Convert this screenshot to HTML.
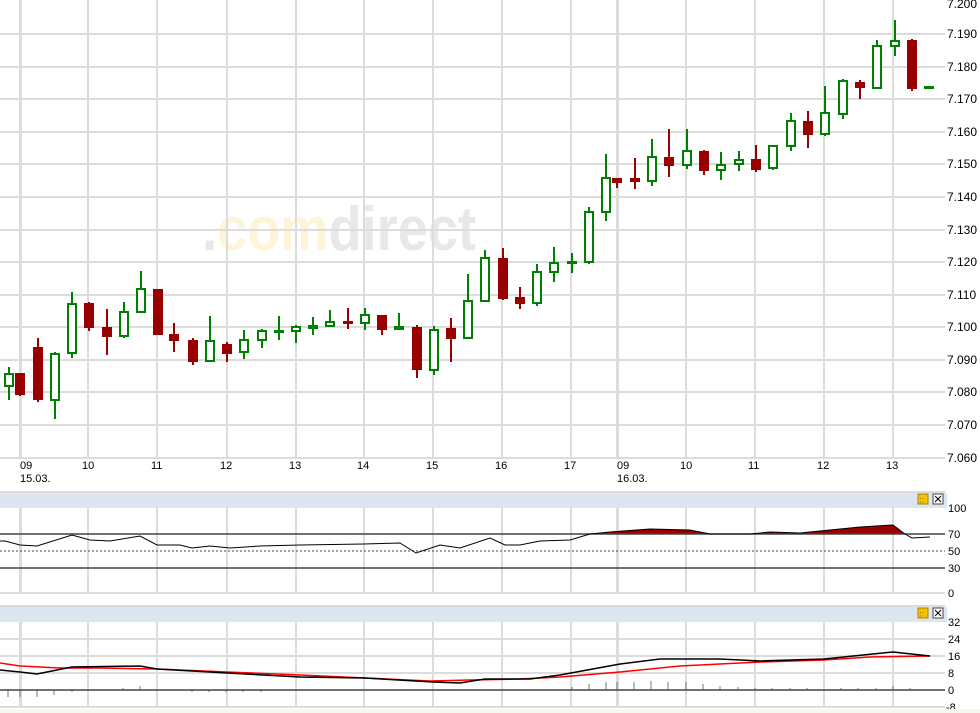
<!DOCTYPE html>
<html><head><meta charset="utf-8"><style>
html,body{margin:0;padding:0;background:#fff;width:980px;height:713px;overflow:hidden}
svg{display:block;font-family:"Liberation Sans",sans-serif}
</style></head><body>
<svg width="980" height="713" viewBox="0 0 980 713" xmlns="http://www.w3.org/2000/svg">
<rect width="980" height="713" fill="#fff"/>
<!-- watermark -->
<text x="202" y="250" font-size="62" font-weight="bold" textLength="274" lengthAdjust="spacingAndGlyphs"><tspan fill="#e8e8e8">.</tspan><tspan fill="#fdf4da">com</tspan><tspan fill="#e8e8e8">direct</tspan></text>
<!-- main grid -->
<g stroke="#dcdcdc" stroke-width="2">
<line x1="0" y1="34" x2="945" y2="34"/><line x1="0" y1="67" x2="945" y2="67"/><line x1="0" y1="99" x2="945" y2="99"/><line x1="0" y1="132" x2="945" y2="132"/><line x1="0" y1="164" x2="945" y2="164"/><line x1="0" y1="197" x2="945" y2="197"/><line x1="0" y1="230" x2="945" y2="230"/><line x1="0" y1="262" x2="945" y2="262"/><line x1="0" y1="295" x2="945" y2="295"/><line x1="0" y1="327" x2="945" y2="327"/><line x1="0" y1="360" x2="945" y2="360"/><line x1="0" y1="392" x2="945" y2="392"/><line x1="0" y1="425" x2="945" y2="425"/><line x1="0" y1="458" x2="945" y2="458"/>
<line x1="88" y1="0" x2="88" y2="458"/><line x1="157" y1="0" x2="157" y2="458"/><line x1="227" y1="0" x2="227" y2="458"/><line x1="296" y1="0" x2="296" y2="458"/><line x1="364" y1="0" x2="364" y2="458"/><line x1="433" y1="0" x2="433" y2="458"/><line x1="502" y1="0" x2="502" y2="458"/><line x1="571" y1="0" x2="571" y2="458"/><line x1="686" y1="0" x2="686" y2="458"/><line x1="755" y1="0" x2="755" y2="458"/><line x1="824" y1="0" x2="824" y2="458"/><line x1="893" y1="0" x2="893" y2="458"/>
</g>
<rect x="19" y="0" width="3" height="458" fill="#dcdcdc"/>
<rect x="616" y="0" width="3" height="458" fill="#dcdcdc"/>
<!-- candles -->
<g stroke-width="2">
<g stroke="#008000" fill="#fff">
<line x1="9" y1="367" x2="9" y2="400"/><rect x="5" y="374" width="8" height="12"/>
<line x1="55" y1="352" x2="55" y2="419"/><rect x="51" y="354" width="8" height="46"/>
<line x1="72" y1="292" x2="72" y2="358"/><rect x="68" y="304" width="8" height="49"/>
<line x1="124" y1="302" x2="124" y2="338"/><rect x="120" y="312" width="8" height="24"/>
<line x1="141" y1="271" x2="141" y2="312"/><rect x="137" y="289" width="8" height="23"/>
<line x1="210" y1="316" x2="210" y2="361"/><rect x="206" y="341" width="8" height="20"/>
<line x1="244" y1="330" x2="244" y2="359"/><rect x="240" y="340" width="8" height="12"/>
<line x1="262" y1="329" x2="262" y2="348"/><rect x="258" y="331" width="8" height="9"/>
<line x1="279" y1="316" x2="279" y2="340"/><rect x="275" y="331" width="8" height="1"/>
<line x1="296" y1="325" x2="296" y2="343"/><rect x="292" y="327" width="8" height="4"/>
<line x1="313" y1="317" x2="313" y2="335"/><rect x="309" y="326" width="8" height="2"/>
<line x1="330" y1="310" x2="330" y2="326"/><rect x="326" y="322" width="8" height="4"/>
<line x1="365" y1="308" x2="365" y2="330"/><rect x="361" y="315" width="8" height="8"/>
<line x1="399" y1="313" x2="399" y2="329"/><rect x="395" y="327" width="8" height="2"/>
<line x1="434" y1="326" x2="434" y2="375"/><rect x="430" y="330" width="8" height="40"/>
<line x1="468" y1="274" x2="468" y2="338"/><rect x="464" y="301" width="8" height="37"/>
<line x1="485" y1="250" x2="485" y2="301"/><rect x="481" y="258" width="8" height="43"/>
<line x1="537" y1="264" x2="537" y2="306"/><rect x="533" y="272" width="8" height="31"/>
<line x1="554" y1="247" x2="554" y2="282"/><rect x="550" y="263" width="8" height="9"/>
<line x1="572" y1="253" x2="572" y2="273"/><rect x="568" y="262" width="8" height="1"/>
<line x1="589" y1="207" x2="589" y2="264"/><rect x="585" y="212" width="8" height="50"/>
<line x1="606" y1="154" x2="606" y2="221"/><rect x="602" y="178" width="8" height="34"/>
<line x1="652" y1="139" x2="652" y2="186"/><rect x="648" y="157" width="8" height="24"/>
<line x1="687" y1="129" x2="687" y2="169"/><rect x="683" y="151" width="8" height="14"/>
<line x1="721" y1="152" x2="721" y2="180"/><rect x="717" y="165" width="8" height="5"/>
<line x1="739" y1="151" x2="739" y2="171"/><rect x="735" y="160" width="8" height="4"/>
<line x1="773" y1="145" x2="773" y2="170"/><rect x="769" y="146" width="8" height="22"/>
<line x1="791" y1="113" x2="791" y2="151"/><rect x="787" y="121" width="8" height="25"/>
<line x1="825" y1="86" x2="825" y2="136"/><rect x="821" y="113" width="8" height="21"/>
<line x1="843" y1="79" x2="843" y2="119"/><rect x="839" y="81" width="8" height="33"/>
<line x1="877" y1="40" x2="877" y2="88"/><rect x="873" y="46" width="8" height="42"/>
<line x1="895" y1="20" x2="895" y2="56"/><rect x="891" y="41" width="8" height="5"/>
<line x1="929" y1="86" x2="929" y2="89"/><rect x="925" y="87" width="8" height="1"/>
</g>
<g stroke="#990000" fill="#990000">
<line x1="20" y1="373" x2="20" y2="396"/><rect x="15" y="373" width="10" height="22" stroke="none"/>
<line x1="38" y1="338" x2="38" y2="402"/><rect x="33" y="347" width="10" height="53" stroke="none"/>
<line x1="89" y1="302" x2="89" y2="331"/><rect x="84" y="303" width="10" height="25" stroke="none"/>
<line x1="107" y1="309" x2="107" y2="355"/><rect x="102" y="327" width="10" height="10" stroke="none"/>
<rect x="153" y="289" width="10" height="46" stroke="none"/>
<line x1="174" y1="323" x2="174" y2="352"/><rect x="169" y="334" width="10" height="7" stroke="none"/>
<line x1="193" y1="338" x2="193" y2="365"/><rect x="188" y="340" width="10" height="22" stroke="none"/>
<line x1="227" y1="342" x2="227" y2="362"/><rect x="222" y="344" width="10" height="10" stroke="none"/>
<line x1="348" y1="308" x2="348" y2="329"/><rect x="343" y="321" width="10" height="3" stroke="none"/>
<line x1="382" y1="315" x2="382" y2="335"/><rect x="377" y="315" width="10" height="15" stroke="none"/>
<line x1="417" y1="325" x2="417" y2="378"/><rect x="412" y="327" width="10" height="43" stroke="none"/>
<line x1="451" y1="318" x2="451" y2="362"/><rect x="446" y="328" width="10" height="11" stroke="none"/>
<line x1="503" y1="248" x2="503" y2="300"/><rect x="498" y="258" width="10" height="41" stroke="none"/>
<line x1="520" y1="287" x2="520" y2="309"/><rect x="515" y="297" width="10" height="7" stroke="none"/>
<line x1="617" y1="178" x2="617" y2="188"/><rect x="612" y="178" width="10" height="5" stroke="none"/>
<line x1="635" y1="158" x2="635" y2="189"/><rect x="630" y="178" width="10" height="4" stroke="none"/>
<line x1="669" y1="129" x2="669" y2="177"/><rect x="664" y="157" width="10" height="9" stroke="none"/>
<line x1="704" y1="150" x2="704" y2="175"/><rect x="699" y="151" width="10" height="20" stroke="none"/>
<line x1="756" y1="145" x2="756" y2="172"/><rect x="751" y="159" width="10" height="11" stroke="none"/>
<line x1="808" y1="111" x2="808" y2="148"/><rect x="803" y="121" width="10" height="14" stroke="none"/>
<line x1="860" y1="80" x2="860" y2="99"/><rect x="855" y="82" width="10" height="6" stroke="none"/>
<line x1="912" y1="39" x2="912" y2="91"/><rect x="907" y="40" width="10" height="49" stroke="none"/>
</g>
</g>
<!-- y labels -->
<g font-size="12" fill="#000">
<text x="947" y="8">7.200</text><text x="947" y="38">7.190</text><text x="947" y="71">7.180</text><text x="947" y="103">7.170</text><text x="947" y="136">7.160</text><text x="947" y="168">7.150</text><text x="947" y="201">7.140</text><text x="947" y="234">7.130</text><text x="947" y="266">7.120</text><text x="947" y="299">7.110</text><text x="947" y="331">7.100</text><text x="947" y="364">7.090</text><text x="947" y="396">7.080</text><text x="947" y="429">7.070</text><text x="947" y="462">7.060</text>
</g>
<!-- x labels -->
<g font-size="11" fill="#000">
<text x="20" y="469">09</text><text x="20" y="482">15.03.</text>
<text x="82" y="469">10</text><text x="151" y="469">11</text><text x="220" y="469">12</text><text x="289" y="469">13</text><text x="357" y="469">14</text><text x="426" y="469">15</text><text x="495" y="469">16</text><text x="564" y="469">17</text>
<text x="617" y="469">09</text><text x="617" y="482">16.03.</text>
<text x="680" y="469">10</text><text x="748" y="469">11</text><text x="817" y="469">12</text><text x="886" y="469">13</text>
</g>
<!-- panel 1 -->
<line x1="0" y1="492" x2="945" y2="492" stroke="#dcdcdc" stroke-width="2"/>
<rect x="0" y="493" width="947" height="15" fill="#dce6f0"/>
<g stroke="#dcdcdc" stroke-width="2">
<line x1="0" y1="593" x2="945" y2="593"/>
<line x1="88" y1="508" x2="88" y2="593"/><line x1="157" y1="508" x2="157" y2="593"/><line x1="227" y1="508" x2="227" y2="593"/><line x1="296" y1="508" x2="296" y2="593"/><line x1="364" y1="508" x2="364" y2="593"/><line x1="433" y1="508" x2="433" y2="593"/><line x1="502" y1="508" x2="502" y2="593"/><line x1="571" y1="508" x2="571" y2="593"/><line x1="686" y1="508" x2="686" y2="593"/><line x1="755" y1="508" x2="755" y2="593"/><line x1="824" y1="508" x2="824" y2="593"/><line x1="893" y1="508" x2="893" y2="593"/>
</g>
<rect x="19" y="508" width="3" height="85" fill="#dcdcdc"/><rect x="616" y="508" width="3" height="85" fill="#dcdcdc"/>
<polygon fill="#990000" points="590,534 610,532 650,529 690,530 710,534 750,534 770,532 800,533 830,530 860,527 893,525 905,534" />
<line x1="0" y1="534" x2="945" y2="534" stroke="#444" stroke-width="1.5"/>
<line x1="0" y1="551" x2="945" y2="551" stroke="#444" stroke-width="1" stroke-dasharray="2,2"/>
<line x1="0" y1="568" x2="945" y2="568" stroke="#444" stroke-width="1.5"/>
<polyline fill="none" stroke="#000" stroke-width="1" points="0,541 5,541 20,545 37,546 72,535 90,540 110,541 140,536 157,545 180,545 192,548 210,546 230,548 260,546 300,545 364,544 400,543 416,553 440,545 460,548 490,538 505,545 520,545 540,541 570,540 590,534 610,532 650,529 690,530 710,534 750,534 770,532 800,533 830,530 860,527 893,525 905,534 912,538 930,537"/>
<rect x="918" y="494" width="10" height="10" fill="#f5c400" stroke="#b08000"/>
<text x="919.5" y="502.5" font-size="8" fill="#7a5000">::</text>
<rect x="933" y="494" width="10" height="10" fill="#fff" stroke="#444"/>
<path d="M935 496 L941 502 M941 496 L935 502" stroke="#000" stroke-width="1"/>
<g font-size="11" fill="#000"><text x="948" y="512">100</text><text x="948" y="538">70</text><text x="948" y="555">50</text><text x="948" y="572">30</text><text x="948" y="597">0</text></g>
<!-- panel 2 -->
<line x1="0" y1="606" x2="945" y2="606" stroke="#dcdcdc" stroke-width="2"/>
<rect x="0" y="607" width="947" height="15" fill="#dce6f0"/>
<g stroke="#dcdcdc" stroke-width="2">
<line x1="0" y1="639" x2="945" y2="639"/><line x1="0" y1="656" x2="945" y2="656"/><line x1="0" y1="673" x2="945" y2="673"/><line x1="0" y1="707" x2="945" y2="707"/>
<line x1="88" y1="622" x2="88" y2="707"/><line x1="157" y1="622" x2="157" y2="707"/><line x1="227" y1="622" x2="227" y2="707"/><line x1="296" y1="622" x2="296" y2="707"/><line x1="364" y1="622" x2="364" y2="707"/><line x1="433" y1="622" x2="433" y2="707"/><line x1="502" y1="622" x2="502" y2="707"/><line x1="571" y1="622" x2="571" y2="707"/><line x1="686" y1="622" x2="686" y2="707"/><line x1="755" y1="622" x2="755" y2="707"/><line x1="824" y1="622" x2="824" y2="707"/><line x1="893" y1="622" x2="893" y2="707"/>
</g>
<rect x="19" y="622" width="3" height="85" fill="#dcdcdc"/><rect x="616" y="622" width="3" height="85" fill="#dcdcdc"/>
<g stroke="#5a8a5a" stroke-width="1">
<line x1="8" y1="690" x2="8" y2="697"/><line x1="20" y1="690" x2="20" y2="697"/><line x1="37" y1="690" x2="37" y2="697"/><line x1="54" y1="690" x2="54" y2="695"/><line x1="72" y1="690" x2="72" y2="692"/><line x1="140" y1="690" x2="140" y2="686"/><line x1="123" y1="690" x2="123" y2="688"/><line x1="192" y1="690" x2="192" y2="692"/><line x1="209" y1="690" x2="209" y2="692"/><line x1="226" y1="690" x2="226" y2="692"/><line x1="243" y1="690" x2="243" y2="692"/><line x1="261" y1="690" x2="261" y2="692"/>
<line x1="572" y1="690" x2="572" y2="687"/><line x1="589" y1="690" x2="589" y2="684"/><line x1="606" y1="690" x2="606" y2="682"/><line x1="617" y1="690" x2="617" y2="682"/><line x1="634" y1="690" x2="634" y2="682"/><line x1="651" y1="690" x2="651" y2="681"/><line x1="668" y1="690" x2="668" y2="682"/><line x1="686" y1="690" x2="686" y2="682"/><line x1="703" y1="690" x2="703" y2="684"/><line x1="720" y1="690" x2="720" y2="686"/><line x1="738" y1="690" x2="738" y2="687"/><line x1="755" y1="690" x2="755" y2="688"/><line x1="772" y1="690" x2="772" y2="688"/><line x1="790" y1="690" x2="790" y2="688"/><line x1="807" y1="690" x2="807" y2="688"/><line x1="841" y1="690" x2="841" y2="688"/><line x1="858" y1="690" x2="858" y2="688"/><line x1="876" y1="690" x2="876" y2="688"/><line x1="893" y1="690" x2="893" y2="686"/><line x1="910" y1="690" x2="910" y2="688"/>
</g>
<line x1="0" y1="690" x2="945" y2="690" stroke="#444" stroke-width="1.5"/>
<polyline fill="none" stroke="#f00" stroke-width="1.5" points="0,663 20,666 60,668 100,668 157,669 227,672 300,675 430,681 470,680 520,679 560,677 620,672 680,666 760,662 824,660 870,657 930,656"/>
<polyline fill="none" stroke="#000" stroke-width="1.5" points="0,670 20,672 37,674 72,667 140,666 157,669 227,673 300,677 364,678 433,682 460,683 485,679 530,679 560,675 620,664 660,659 720,659 760,661 824,659 893,652 930,656"/>
<rect x="918" y="608" width="10" height="10" fill="#f5c400" stroke="#b08000"/>
<text x="919.5" y="616.5" font-size="8" fill="#7a5000">::</text>
<rect x="933" y="608" width="10" height="10" fill="#fff" stroke="#444"/>
<path d="M935 610 L941 616 M941 610 L935 616" stroke="#000" stroke-width="1"/>
<g font-size="11" fill="#000"><text x="948" y="626">32</text><text x="948" y="643">24</text><text x="948" y="660">16</text><text x="948" y="677">8</text><text x="948" y="694">0</text><text x="946" y="711">-8</text></g>
<rect x="0" y="709" width="980" height="4" fill="#f7f7ea"/>
</svg>
</body></html>
